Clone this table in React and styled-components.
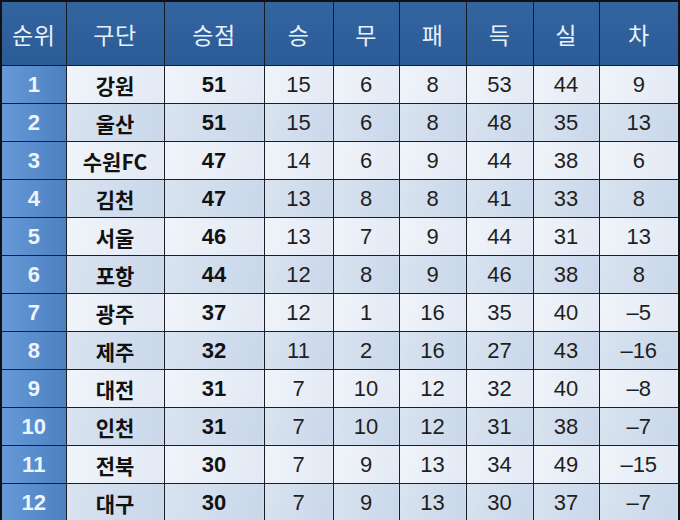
import React from "react";
import styled, { createGlobalStyle } from "styled-components";

const GlobalStyle = createGlobalStyle`
  html, body {
    margin: 0;
    padding: 0;
    background: #ffffff;
  }
`;

const standings = [
  [1, "강원", 51, 15, 6, 8, 53, 44, "9"],
  [2, "울산", 51, 15, 6, 8, 48, 35, "13"],
  [3, "수원FC", 47, 14, 6, 9, 44, 38, "6"],
  [4, "김천", 47, 13, 8, 8, 41, 33, "8"],
  [5, "서울", 46, 13, 7, 9, 44, 31, "13"],
  [6, "포항", 44, 12, 8, 9, 46, 38, "8"],
  [7, "광주", 37, 12, 1, 16, 35, 40, "–5"],
  [8, "제주", 32, 11, 2, 16, 27, 43, "–16"],
  [9, "대전", 31, 7, 10, 12, 32, 40, "–8"],
  [10, "인천", 31, 7, 10, 12, 31, 38, "–7"],
  [11, "전북", 30, 7, 9, 13, 34, 49, "–15"],
  [12, "대구", 30, 7, 9, 13, 30, 37, "–7"],
];

const headers = ["순위", "구단", "승점", "승", "무", "패", "득", "실", "차"];
const widths = [65, 98, 100, 69, 66, 67, 67, 66, 80];

const Table = styled.table`
  width: 680px;
  height: 520px;
  border-collapse: collapse;
  table-layout: fixed;
  border: 2px solid #111;
  font-family: "Noto Sans CJK KR", "Liberation Sans", sans-serif;
`;

const HeadCell = styled.th`
  height: 63px;
  padding: 0;
  border: 1px solid #161c26;
  background: linear-gradient(180deg, #3264a0 0%, #2c5c96 100%);
  color: #e9f1fb;
  font-size: 23px;
  font-weight: 400;
  text-align: center;
  letter-spacing: 0.5px;
`;

const Cell = styled.td`
  height: 37px;
  padding: 0;
  border: 1px solid #1c1f24;
  text-align: center;
  font-family: "Liberation Sans", "Noto Sans CJK KR", sans-serif;
  font-size: 22px;
  color: #1f1f1f;
  background: ${(p) =>
    p.$even
      ? "linear-gradient(100deg, #d9e3f0 0%, #c9d7ea 100%)"
      : "linear-gradient(100deg, #f0f4fa 0%, #e2e9f4 100%)"};
`;

const RankCell = styled(Cell)`
  color: #eef4fc;
  font-weight: 700;
  background: linear-gradient(90deg, #6699d6 0%, #4c80c1 100%);
`;

const ClubCell = styled(Cell)`
  font-family: "Noto Sans CJK KR", "Liberation Sans", sans-serif;
  font-weight: 700;
  font-size: 21px;
  color: #111;
`;

const PointsCell = styled(Cell)`
  font-weight: 700;
  color: #111;
`;

export default function App() {
  return (
    <>
      <GlobalStyle />
      <Table>
        <colgroup>
          {widths.map((w, i) => (
            <col key={i} style={{ width: w }} />
          ))}
        </colgroup>
        <thead>
          <tr>
            {headers.map((h) => (
              <HeadCell key={h}>{h}</HeadCell>
            ))}
          </tr>
        </thead>
        <tbody>
          {standings.map((row, i) => {
            const even = i % 2 === 1;
            const [rank, club, pts, ...rest] = row;
            return (
              <tr key={rank}>
                <RankCell>{rank}</RankCell>
                <ClubCell $even={even}>{club}</ClubCell>
                <PointsCell $even={even}>{pts}</PointsCell>
                {rest.map((v, j) => (
                  <Cell key={j} $even={even}>
                    {v}
                  </Cell>
                ))}
              </tr>
            );
          })}
        </tbody>
      </Table>
    </>
  );
}
